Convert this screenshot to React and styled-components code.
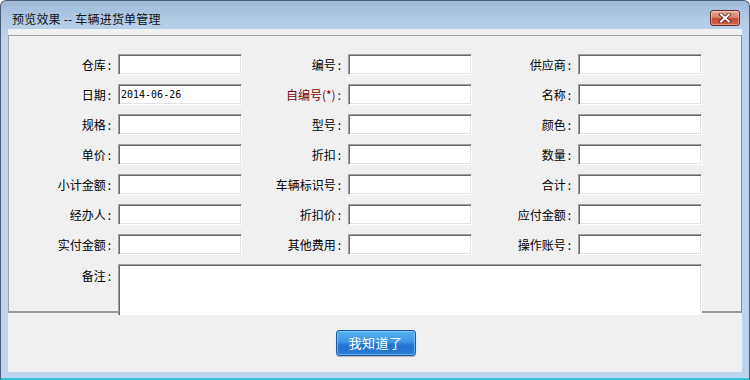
import React from 'react';
import styled, { createGlobalStyle } from 'styled-components';

const GlobalStyle = createGlobalStyle`
  html, body {
    margin: 0;
    padding: 0;
    background: #fff;
  }
  body {
    font-family: "Noto Sans CJK SC", "Liberation Sans", sans-serif;
    font-size: 12px;
  }
`;

const Window = styled.div`
  width: 750px;
  height: 380px;
  box-sizing: border-box;
  display: flex;
  flex-direction: column;
  background: linear-gradient(180deg, #9db9d8 0px, #b4cbe5 20px, #bed4ec 40px, #bed4ec 100%);
  border: 1px solid #4a5d74;
  border-bottom: 2px solid #2fc3df;
  border-radius: 6px 6px 0 0;
  overflow: hidden;
`;

const TitleBar = styled.div`
  height: 28px;
  flex: none;
  display: flex;
  align-items: center;
  justify-content: space-between;
  padding: 0 9px 0 11px;
  color: #111;
  font-size: 12px;
`;

const Title = styled.span`
  margin-top: 7px;
  letter-spacing: 0.2px;
`;

const CloseButton = styled.div`
  width: 30px;
  height: 16px;
  box-sizing: border-box;
  margin-top: 6px;
  border: 1px solid #6e2a22;
  border-radius: 3px;
  background: linear-gradient(180deg, #e9a99c 0%, #d8816f 45%, #c24a33 55%, #d1674f 100%);
  box-shadow: inset 0 0 0 1px rgba(255, 255, 255, 0.35);
  display: flex;
  align-items: center;
  justify-content: center;
`;

const Client = styled.div`
  flex: 1;
  margin: 0 7px 6px 7px;
  background: #f0f0f0;
  display: flex;
  flex-direction: column;
  padding-top: 6px;
`;

const Panel = styled.div`
  height: 278px;
  box-sizing: border-box;
  flex: none;
  border: 1px solid #a0a0a0;
  border-right-color: #8c8c8c;
  border-bottom: 2px solid #9a9a9a;
  padding: 18px 0 0 3px;
`;

const FormGrid = styled.div`
  display: grid;
  grid-template-columns: 106px 124px 106px 124px 106px 124px;
  grid-auto-rows: 21px;
  row-gap: 9px;
`;

const Label = styled.label`
  display: flex;
  align-items: ${(p) => (p.$top ? 'flex-start' : 'center')};
  justify-content: flex-end;
  padding: ${(p) => (p.$top ? '3px 7px 0 0' : '0 7px 0 0')};
  color: ${(p) => (p.$required ? '#7a0000' : '#000')};
  font-size: 12px;
  white-space: nowrap;
`;

const Colon = styled.span`
  margin-left: 2px;
`;

const Input = styled.input`
  box-sizing: border-box;
  width: 124px;
  height: 21px;
  margin: 0;
  padding: 0 2px;
  background: #fff;
  border: 1px solid;
  border-color: #a0a0a0 #ffffff #ffffff #a0a0a0;
  box-shadow: inset 1px 1px 0 #696969, inset -1px -1px 0 #e3e3e3;
  font-family: "DejaVu Sans Mono", "Liberation Mono", monospace;
  font-size: 10px;
  color: #000;
  outline: none;
`;

const Memo = styled.textarea`
  grid-column: 2 / span 5;
  box-sizing: border-box;
  height: 51px;
  margin: 0;
  resize: none;
  background: #fff;
  border: 1px solid;
  border-color: #a0a0a0 #ffffff #ffffff #a0a0a0;
  border-bottom: none;
  box-shadow: inset 1px 1px 0 #696969, inset -1px 0 0 #e3e3e3;
  outline: none;
`;

const Footer = styled.div`
  flex: 1;
  display: flex;
  align-items: center;
  justify-content: center;
  padding-left: 1px;
`;

const OkButton = styled.button`
  width: 80px;
  height: 26px;
  box-sizing: border-box;
  border: 1px solid #1b5ba6;
  border-radius: 3px;
  background: linear-gradient(180deg, #56b3f0 0%, #3d95e2 45%, #2371d0 60%, #2a7ad6 100%);
  box-shadow: inset 0 0 0 1px rgba(140, 210, 255, 0.6), 0 1px 1px rgba(0, 0, 0, 0.25);
  color: #fff;
  font-family: "Noto Sans CJK SC", sans-serif;
  font-size: 13px;
  letter-spacing: 0.5px;
  padding: 0;
`;

const fields = [
  ['仓库', '', '编号', '', '供应商', ''],
  ['日期', '2014-06-26', '自编号(*)', '', '名称', ''],
  ['规格', '', '型号', '', '颜色', ''],
  ['单价', '', '折扣', '', '数量', ''],
  ['小计金额', '', '车辆标识号', '', '合计', ''],
  ['经办人', '', '折扣价', '', '应付金额', ''],
  ['实付金额', '', '其他费用', '', '操作账号', ''],
];

const CloseIcon = () => (
  <svg width="14" height="10" viewBox="0 0 14 10">
    <path d="M3 1.5 L11 8.5 M11 1.5 L3 8.5" stroke="#5a1a12" strokeWidth="3.6" strokeLinecap="square" />
    <path d="M3 1.5 L11 8.5 M11 1.5 L3 8.5" stroke="#fff" strokeWidth="2" strokeLinecap="square" />
  </svg>
);

const App = () => {
  return (
    <>
      <GlobalStyle />
      <Window>
        <TitleBar>
          <Title>预览效果 -- 车辆进货单管理</Title>
          <CloseButton>
            <CloseIcon />
          </CloseButton>
        </TitleBar>
        <Client>
          <Panel>
            <FormGrid>
              {fields.map((row, i) =>
                [0, 2, 4].map((c) => (
                  <React.Fragment key={`${i}-${c}`}>
                    <Label $required={row[c] === '自编号(*)'}>
                      {row[c]}
                      <Colon>:</Colon>
                    </Label>
                    <Input defaultValue={row[c + 1]} />
                  </React.Fragment>
                ))
              )}
              <Label $top>
                备注
                <Colon>:</Colon>
              </Label>
              <Memo />
            </FormGrid>
          </Panel>
          <Footer>
            <OkButton>我知道了</OkButton>
          </Footer>
        </Client>
      </Window>
    </>
  );
};

export default App;
